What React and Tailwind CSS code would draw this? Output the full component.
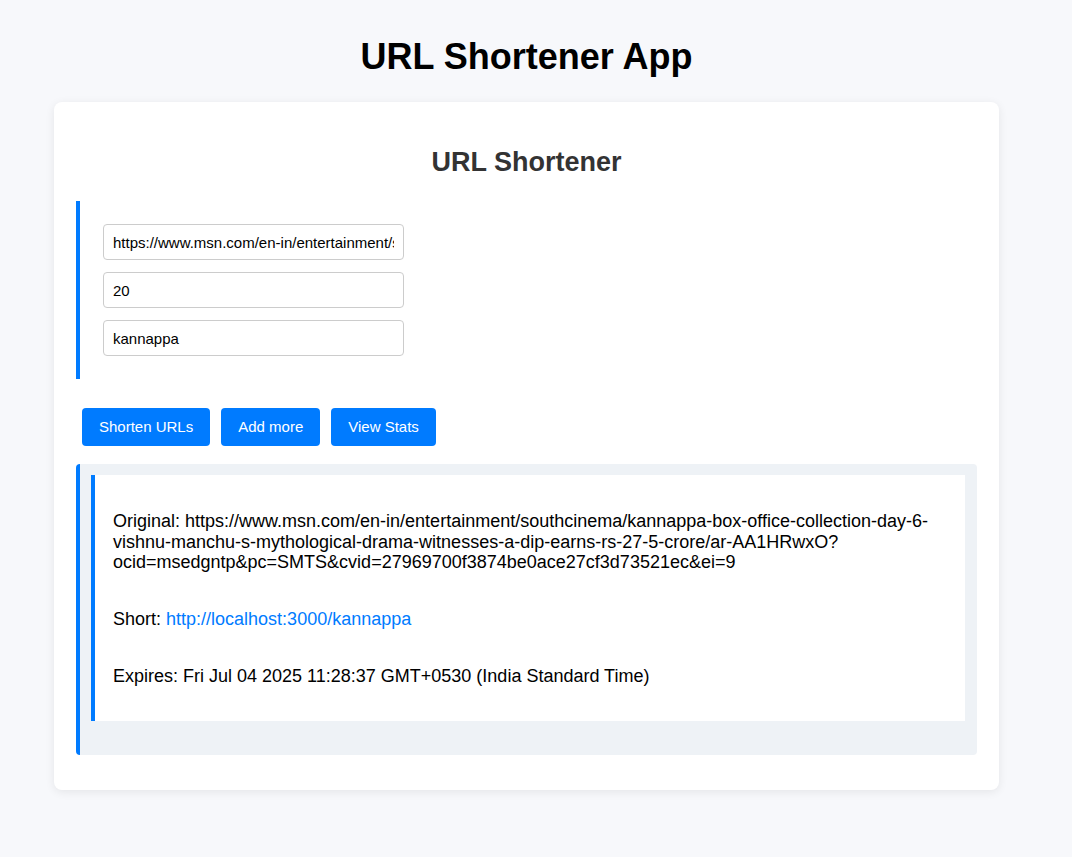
import React from 'react';

const longUrl =
    'https://www.msn.com/en-in/entertainment/southcinema/kannappa-box-office-collection-day-6-vishnu-manchu-s-mythological-drama-witnesses-a-dip-earns-rs-27-5-crore/ar-AA1HRwxO?ocid=msedgntp&pc=SMTS&cvid=27969700f3874be0ace27cf3d73521ec&ei=9';

const App = () => {
    const inputs = [longUrl, '20', 'kannappa'];

    return (
        <div className="min-h-screen bg-[#f7f8fb] font-['Liberation_Sans',Arial,sans-serif]">
            <div className="w-[1053px] pt-[36px] pb-[60px]">
                <h1 className="text-center text-[36px] leading-[41px] font-bold text-black">
                    URL Shortener App
                </h1>

                <div className="mx-auto mt-[25px] w-[945px] rounded-lg bg-white px-[22px] pt-[22px] pb-[35px] shadow-[0_2px_10px_rgba(0,0,0,0.08)]">
                    <h2 className="mt-[23px] mb-[23px] text-center text-[27px] leading-[31px] font-bold text-[#333]">
                        URL Shortener
                    </h2>

                    {/* form */}
                    <div className="flex flex-col gap-3 border-l-4 border-[#007bff] py-[23px] pl-[23px]">
                        {inputs.map((value, i) => (
                            <input
                                key={i}
                                readOnly
                                value={value}
                                className="h-[36px] w-[301px] rounded border border-[#ccc] bg-white px-[9px] text-[15px] text-black outline-none"
                            />
                        ))}
                    </div>

                    {/* actions */}
                    <div className="mt-[29px] flex gap-[11px] pl-[6px]">
                        {['Shorten URLs', 'Add more', 'View Stats'].map((label) => (
                            <button
                                key={label}
                                className="rounded bg-[#007bff] px-[17px] py-[10px] text-[15px] leading-[18px] text-white"
                            >
                                {label}
                            </button>
                        ))}
                    </div>

                    {/* results */}
                    <div className="mt-[18px] rounded border-l-4 border-[#007bff] bg-[#eef2f6] pt-[11px] pr-[11px] pb-[34px] pl-[11px]">
                        <div className="mr-px flex flex-col border-l-4 border-[#007bff] bg-white px-[18px] pt-[18px] pb-[16px] text-[18px] leading-[20.7px] text-black">
                            <p className="my-[18px] break-words">Original: {longUrl}</p>
                            <p className="my-[18px]">
                                Short:{' '}
                                <a href="#" className="text-[#007bff]">
                                    http://localhost:3000/kannappa
                                </a>
                            </p>
                            <p className="my-[18px]">
                                Expires: Fri Jul 04 2025 11:28:37 GMT+0530 (India Standard Time)
                            </p>
                        </div>
                    </div>
                </div>
            </div>
        </div>
    );
};

export default App;
